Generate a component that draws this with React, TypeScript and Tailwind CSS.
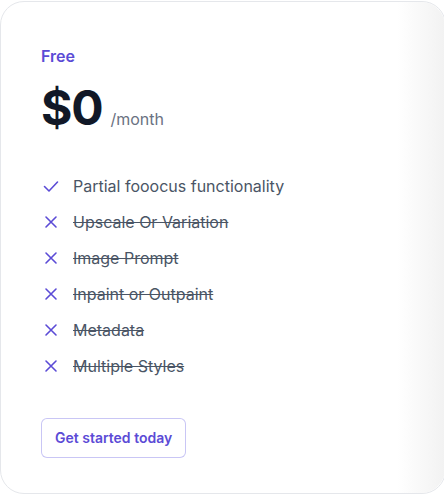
import React from "react";

const features = [
  { name: "Partial fooocus functionality", included: true },
  { name: "Upscale Or Variation", included: false },
  { name: "Image Prompt", included: false },
  { name: "Inpaint or Outpaint", included: false },
  { name: "Metadata", included: false },
  { name: "Multiple Styles", included: false },
];

const CheckIcon = () => (
  <svg viewBox="0 0 20 20" fill="none" stroke="currentColor" strokeWidth={1.6} className="h-6 w-5 flex-none text-[#5b4bd6]">
    <path d="M3.5 10.5l4.5 4.5 8.5-9" strokeLinecap="round" strokeLinejoin="round" />
  </svg>
);

const XIcon = () => (
  <svg viewBox="0 0 20 20" fill="none" stroke="currentColor" strokeWidth={1.6} className="h-6 w-5 flex-none text-[#5b4bd6]">
    <path d="M5 5l10 10M15 5L5 15" strokeLinecap="round" />
  </svg>
);

export default function App() {
  return (
    <div className="h-[495px] w-[444px] overflow-hidden bg-white font-['Inter',sans-serif]">
      <div className="relative mt-px h-[493px] w-[446px] rounded-3xl border border-gray-200 bg-white px-10 pt-10">
        <div className="pointer-events-none absolute inset-y-0 right-0 w-12 rounded-r-3xl bg-gradient-to-r from-transparent to-[#f2f2f2]" />
        <h3 className="text-base font-semibold leading-7 text-[#5b4bd6]">Free</h3>
        <p className="mt-[14px] flex items-baseline gap-x-2">
          <span className="text-5xl font-bold leading-none tracking-tight text-[#111827]">$0</span>
          <span className="text-base text-gray-500">/month</span>
        </p>
        <ul className="mt-[42px] space-y-3 text-base leading-6 text-gray-600">
          {features.map((f) => (
            <li key={f.name} className="flex gap-x-3">
              {f.included ? <CheckIcon /> : <XIcon />}
              <span className={f.included ? "" : "line-through"}>{f.name}</span>
            </li>
          ))}
        </ul>
        <a
          href="#"
          className="mt-10 inline-block rounded-md px-3.5 py-2.5 text-sm font-semibold leading-5 text-[#5b4bd6] ring-1 ring-inset ring-[#c9c6f5]"
        >
          Get started today
        </a>
      </div>
    </div>
  );
}
